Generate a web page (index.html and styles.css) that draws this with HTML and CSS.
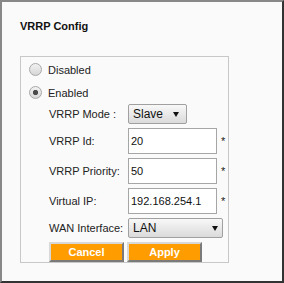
FILE: index.html
```html
<!doctype html>
<html lang="en">
<head>
	<meta charset="UTF-8" />
	<title>VRRP Config</title>
	<link rel="stylesheet" href="styles.css">
</head>
<body>
	<div class="frame">
		<!--标题-->
		<h3 class="title">VRRP Config</h3>

		<div class="panel">
			<!--开关-->
			<label class="opt"><input type="radio" name="vrrp" class="radio" /><span>Disabled</span></label>
			<label class="opt"><input type="radio" name="vrrp" class="radio" checked /><span>Enabled</span></label>

			<!--参数-->
			<div class="form">
				<span class="lbl">VRRP Mode :</span>
				<div class="cell">
					<span class="sel sel-mode">
						<select>
							<option>Slave</option>
							<option>Master</option>
						</select>
					</span>
				</div>

				<span class="lbl">VRRP Id:</span>
				<div class="cell"><input type="text" class="txt" value="20" /><span class="req">*</span></div>

				<span class="lbl">VRRP Priority:</span>
				<div class="cell"><input type="text" class="txt" value="50" /><span class="req">*</span></div>

				<span class="lbl">Virtual IP:</span>
				<div class="cell"><input type="text" class="txt" value="192.168.254.1" /><span class="req">*</span></div>

				<span class="lbl">WAN Interface:</span>
				<div class="cell">
					<span class="sel sel-wan">
						<select>
							<option>LAN</option>
							<option>WAN</option>
						</select>
					</span>
				</div>

				<!--按钮-->
				<div class="btns">
					<button type="button" class="btn">Cancel</button>
					<button type="button" class="btn">Apply</button>
				</div>
			</div>
		</div>
	</div>
</body>
</html>
```

FILE: styles.css
```css
*{
	padding: 0;
	margin: 0;
}
body{
	font-family: "Liberation Sans", Arial, sans-serif;
	font-size: 11px;
	color: #222;
}

/*外框*/
.frame{
	width: 284px;
	height: 283px;
	box-sizing: border-box;
	border: 2px solid;
	border-color: #888 #333 #333 #888;
	background: #fafafa;
	padding: 18px 0 0 18px;
}
.title{
	font-size: 11px;
	font-weight: bold;
	line-height: 13px;
	color: #111;
}

/*内框*/
.panel{
	width: 209px;
	box-sizing: border-box;
	margin-top: 23px;
	border: 1px solid #c8c8c8;
	padding: 1px 0 0 8px;
}
.opt{
	display: flex;
	align-items: center;
	height: 23px;
}
.radio{
	appearance: none;
	-webkit-appearance: none;
	width: 13px;
	height: 13px;
	box-sizing: border-box;
	border: 1px solid #a8a8a8;
	border-radius: 50%;
	background: linear-gradient(#f2f2f2, #d6d6d6);
	margin-right: 6px;
}
.radio:checked{
	background: radial-gradient(circle, #4a4a4a 0, #4a4a4a 2.2px, transparent 3px), linear-gradient(#f2f2f2, #d6d6d6);
}

/*表单*/
.form{
	display: grid;
	grid-template-columns: 79px auto;
	row-gap: 4px;
	align-items: center;
	margin-left: 20px;
}
.cell{
	display: flex;
	align-items: center;
}
.txt{
	width: 89px;
	height: 26px;
	box-sizing: border-box;
	border: 1px solid #a6a6a6;
	padding: 0 2px;
	font-family: "Liberation Sans", Arial, sans-serif;
	font-size: 11px;
	color: #111;
	background: #fff;
	outline: none;
}
.req{
	margin-left: 4px;
	line-height: 13px;
}
.sel{
	position: relative;
	display: inline-block;
}
.sel select{
	appearance: none;
	-webkit-appearance: none;
	height: 20px;
	box-sizing: border-box;
	border: 1px solid #a0a0a0;
	border-radius: 2px;
	background: linear-gradient(#f8f8f8, #dadada);
	padding: 0 0 0 4px;
	font-family: "Liberation Sans", Arial, sans-serif;
	font-size: 12px;
	color: #111;
	display: block;
}
.sel-mode select{
	width: 59px;
}
.sel-wan select{
	width: 95px;
}
.sel::after{
	content: "";
	position: absolute;
	top: 8px;
	border-left: 3px solid transparent;
	border-right: 3px solid transparent;
	border-top: 5px solid #111;
	pointer-events: none;
}
.sel-mode::after{
	right: 8px;
}
.sel-wan::after{
	right: 5px;
}

/*按钮*/
.btns{
	grid-column: 1 / 3;
	display: flex;
	gap: 3px;
}
.btn{
	width: 75px;
	height: 20px;
	box-sizing: border-box;
	border: 2px solid;
	border-color: #d8d8d8 #7a7a7a #7a7a7a #d8d8d8;
	background: #ff9c00;
	color: #fff;
	font-family: "Liberation Sans", Arial, sans-serif;
	font-size: 11px;
	font-weight: bold;
	padding: 0;
}
```
